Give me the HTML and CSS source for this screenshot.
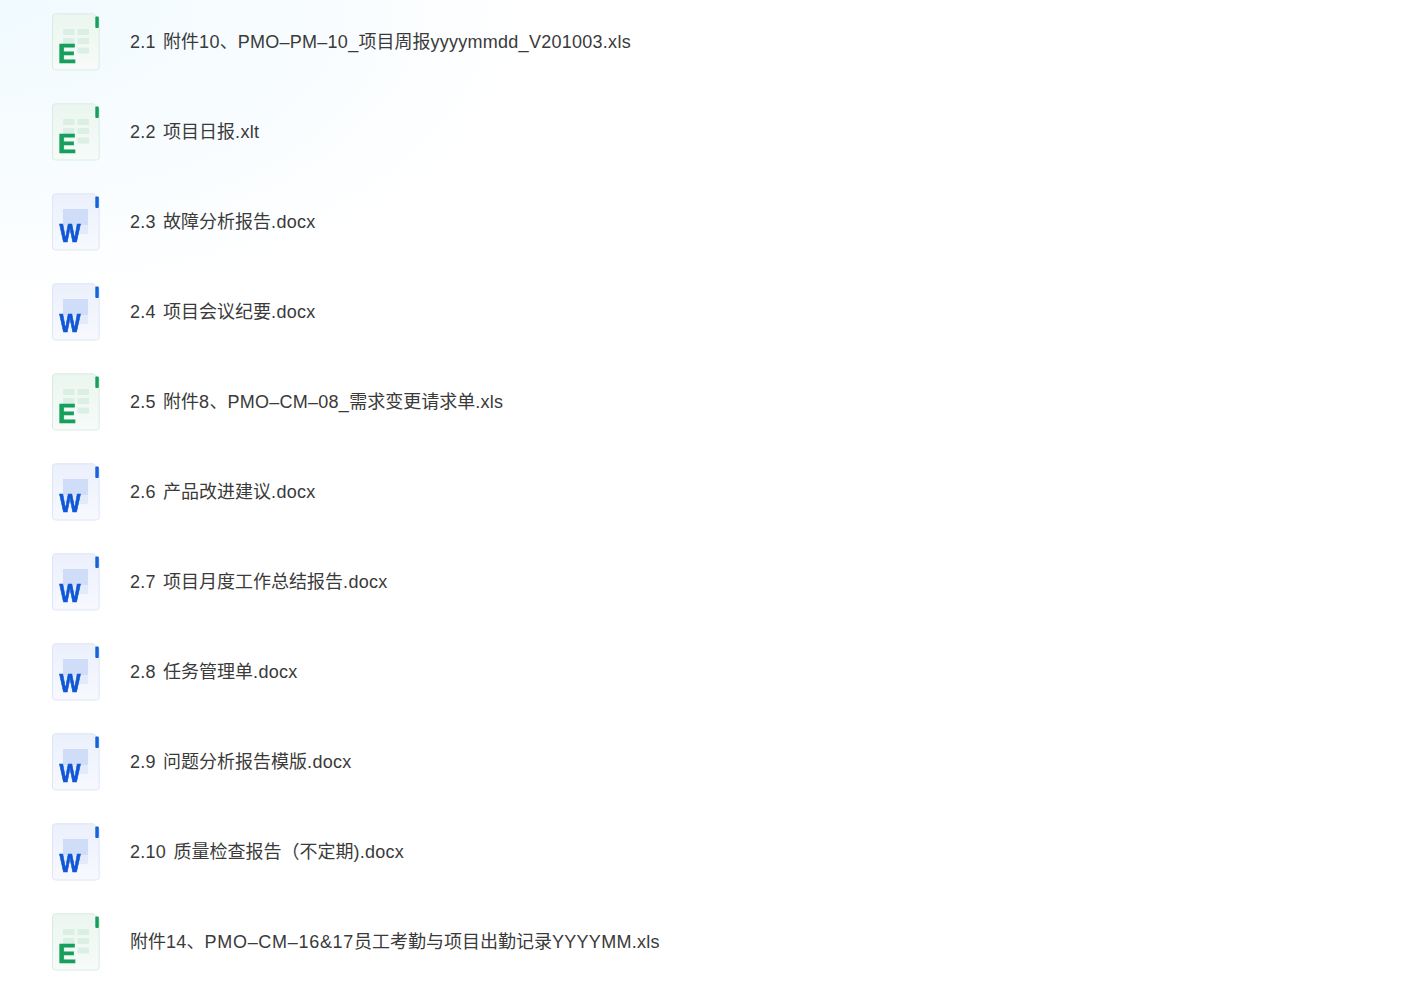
FILE: index.html
```html
<!DOCTYPE html>
<html>
	<head>
		<meta charset="utf-8">
		<title>文件列表</title>
		<link rel="stylesheet" href="styles.css">
	</head>
	<body>
		<svg class="defs" width="0" height="0">
			<defs>
				<linearGradient id="bg-xls" x1="0" y1="0" x2="0" y2="1">
					<stop offset="0" stop-color="#ebf6f0"/>
					<stop offset="1" stop-color="#f7fbf9"/>
				</linearGradient>
				<linearGradient id="bg-doc" x1="0" y1="0" x2="0" y2="1">
					<stop offset="0" stop-color="#ebf0fc"/>
					<stop offset="1" stop-color="#f7f9fe"/>
				</linearGradient>
			</defs>
			<symbol id="icon-xls" viewBox="0 0 48 58">
				<path d="M3.5 .8H41.500L47.200 6V54A3 3 0 0 1 44.200 57H3.500A3 3 0 0 1 .5 54V3.800A3 3 0 0 1 3.500 .8Z" fill="url(#bg-xls)" stroke="#d8ede1"/>
				<rect x="43.300" y="3.500" width="3.500" height="11.500" rx="1" fill="#17a05d"/>
				<g fill="#dbefe4">
					<rect x="11" y="16" width="11.500" height="6"/>
					<rect x="25.500" y="16" width="11.500" height="6"/>
					<rect x="11" y="25" width="11.500" height="6"/>
					<rect x="25.500" y="25" width="11.500" height="6"/>
					<rect x="25.500" y="34.500" width="11.500" height="6"/>
				</g>
			</symbol>
			<symbol id="icon-doc" viewBox="0 0 48 58">
				<path d="M3.5 .8H41.500L47.200 6V54A3 3 0 0 1 44.200 57H3.500A3 3 0 0 1 .5 54V3.800A3 3 0 0 1 3.500 .8Z" fill="url(#bg-doc)" stroke="#dde5f7"/>
				<rect x="43.300" y="3.500" width="3.500" height="11.500" rx="1" fill="#1463d8"/>
				<rect x="11" y="16" width="25" height="16" fill="#d0ddf8"/>
				<rect x="11" y="32" width="25" height="9" fill="#e3eafa"/>
			</symbol>
		</svg>
		<ul class="file-list">
			<li class="file-row">
				<svg class="file-icon"><use href="#icon-xls"/><text x="6" y="50" class="letter letter-e">E</text></svg>
				<span class="file-name"><span class="lat">2.1 </span>附件<span class="lat">10</span>、<span class="lat">PMO–PM–10_</span>项目周报<span class="lat">yyyymmdd_V201003.xls</span></span>
			</li>
			<li class="file-row">
				<svg class="file-icon"><use href="#icon-xls"/><text x="6" y="50" class="letter letter-e">E</text></svg>
				<span class="file-name"><span class="lat">2.2 </span>项目日报<span class="lat">.xlt</span></span>
			</li>
			<li class="file-row">
				<svg class="file-icon"><use href="#icon-doc"/><text x="7.500" y="49" class="letter letter-w" textLength="21" lengthAdjust="spacingAndGlyphs">W</text></svg>
				<span class="file-name"><span class="lat">2.3 </span>故障分析报告<span class="lat">.docx</span></span>
			</li>
			<li class="file-row">
				<svg class="file-icon"><use href="#icon-doc"/><text x="7.500" y="49" class="letter letter-w" textLength="21" lengthAdjust="spacingAndGlyphs">W</text></svg>
				<span class="file-name"><span class="lat">2.4 </span>项目会议纪要<span class="lat">.docx</span></span>
			</li>
			<li class="file-row">
				<svg class="file-icon"><use href="#icon-xls"/><text x="6" y="50" class="letter letter-e">E</text></svg>
				<span class="file-name"><span class="lat">2.5 </span>附件<span class="lat">8</span>、<span class="lat">PMO–CM–08_</span>需求变更请求单<span class="lat">.xls</span></span>
			</li>
			<li class="file-row">
				<svg class="file-icon"><use href="#icon-doc"/><text x="7.500" y="49" class="letter letter-w" textLength="21" lengthAdjust="spacingAndGlyphs">W</text></svg>
				<span class="file-name"><span class="lat">2.6 </span>产品改进建议<span class="lat">.docx</span></span>
			</li>
			<li class="file-row">
				<svg class="file-icon"><use href="#icon-doc"/><text x="7.500" y="49" class="letter letter-w" textLength="21" lengthAdjust="spacingAndGlyphs">W</text></svg>
				<span class="file-name"><span class="lat">2.7 </span>项目月度工作总结报告<span class="lat">.docx</span></span>
			</li>
			<li class="file-row">
				<svg class="file-icon"><use href="#icon-doc"/><text x="7.500" y="49" class="letter letter-w" textLength="21" lengthAdjust="spacingAndGlyphs">W</text></svg>
				<span class="file-name"><span class="lat">2.8 </span>任务管理单<span class="lat">.docx</span></span>
			</li>
			<li class="file-row">
				<svg class="file-icon"><use href="#icon-doc"/><text x="7.500" y="49" class="letter letter-w" textLength="21" lengthAdjust="spacingAndGlyphs">W</text></svg>
				<span class="file-name"><span class="lat">2.9 </span>问题分析报告模版<span class="lat">.docx</span></span>
			</li>
			<li class="file-row">
				<svg class="file-icon"><use href="#icon-doc"/><text x="7.500" y="49" class="letter letter-w" textLength="21" lengthAdjust="spacingAndGlyphs">W</text></svg>
				<span class="file-name"><span class="lat">2.10 </span>质量检查报告（不定期<span class="lat">).docx</span></span>
			</li>
			<li class="file-row">
				<svg class="file-icon"><use href="#icon-xls"/><text x="6" y="50" class="letter letter-e">E</text></svg>
				<span class="file-name">附件<span class="lat">14</span>、<span class="lat lat-wide">PMO–CM–16&amp;17</span>员工考勤与项目出勤记录<span class="lat">YYYYMM.xls</span></span>
			</li>
		</ul>
	</body>
</html>
```
FILE: styles.css
```css
html, body {
	margin: 0;
	padding: 0;
	height: 100%;
}

body {
	overflow: hidden;
	background: #fff radial-gradient(ellipse 540px 310px at 0 0, #f0faff 0%, #f7fcff 50%, #fff 100%) no-repeat;
	font-family: "Liberation Sans", "Noto Sans CJK SC", sans-serif;
	color: #3a3a3a;
}

.defs {
	position: absolute;
}

.letter {
	font-family: "Liberation Sans", sans-serif;
	font-size: 27px;
	font-weight: bold;
	stroke-width: .7px;
}

.letter-e {
	fill: #17a05d;
	stroke: #17a05d;
}

.letter-w {
	font-size: 26px;
	fill: #1057d6;
	stroke: #1057d6;
}

.file-list {
	list-style: none;
	margin: 0;
	padding: 13px 0 0 52px;
	display: flex;
	flex-direction: column;
	gap: 32px;
}

.file-row {
	display: flex;
	align-items: center;
	height: 58px;
	gap: 30px;
}

.file-icon {
	width: 48px;
	height: 58px;
	flex: none;
	filter: blur(.3px);
}

.file-name {
	font-size: 18px;
	line-height: 24px;
}

/* latin runs are a bit wider than liberation sans */
.lat {
	letter-spacing: .27px;
	word-spacing: 2px;
}

.lat-wide {
	letter-spacing: .7px;
}
```
